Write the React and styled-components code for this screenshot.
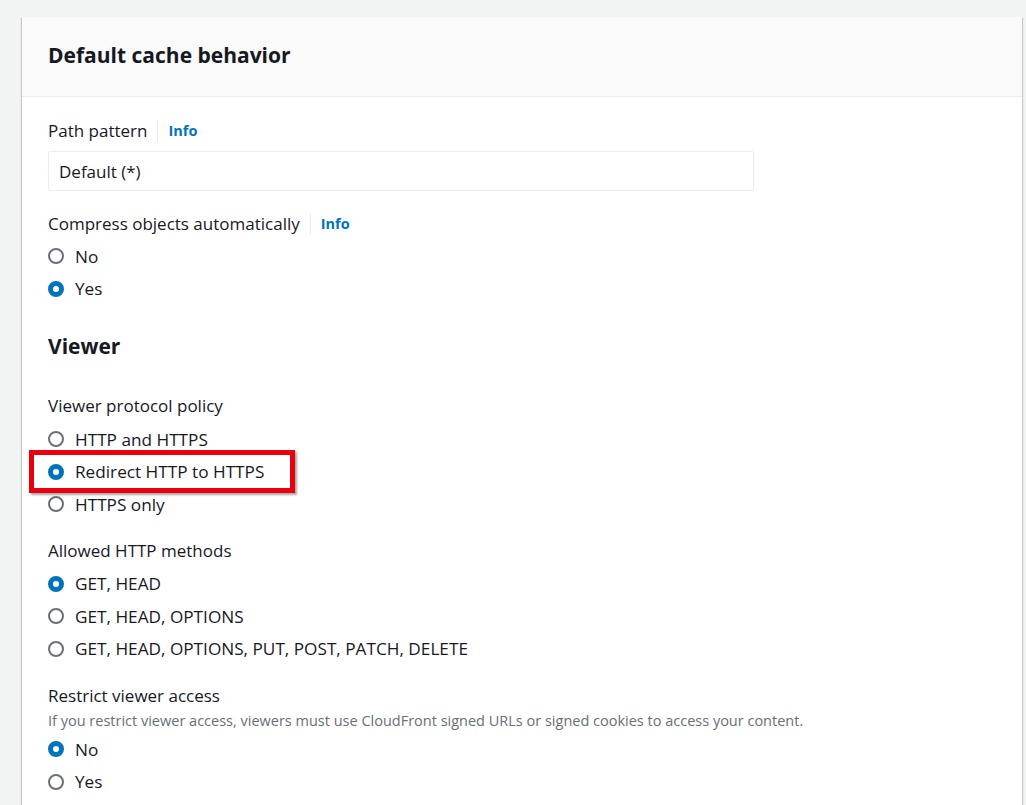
import React from "react";
import styled, { createGlobalStyle } from "styled-components";

const Global = createGlobalStyle`
  html, body { margin: 0; padding: 0; }
  body {
    background: #f2f3f3;
    font-family: "Open Sans", "Noto Sans", Arial, sans-serif;
    color: #16191f;
    -webkit-font-smoothing: antialiased;
  }
`;

const Page = styled.div`
  padding: 17px 0 0 22px;
  height: 805px;
  box-sizing: border-box;
  overflow: hidden;
`;

const Card = styled.section`
  width: 1000px;
  background: #fff;
  box-shadow: 0 1px 1px 0 rgba(0, 28, 36, 0.3), 1px 1px 1px 0 rgba(0, 28, 36, 0.15),
    -1px 1px 1px 0 rgba(0, 28, 36, 0.15);
  min-height: 800px;
`;

const CardHeader = styled.header`
  height: 80px;
  box-sizing: border-box;
  display: flex;
  align-items: center;
  padding: 0 26px 4px;
  background: #fafafa;
  border-bottom: 1px solid #eaeded;
`;

const Title = styled.h2`
  margin: 0;
  font-size: 21px;
  font-weight: 700;
  line-height: 28px;
  color: #16191f;
`;

const Body = styled.div`
  padding: 23px 26px;
  display: flex;
  flex-direction: column;
`;

const Field = styled.div`
  display: flex;
  flex-direction: column;
  margin-top: ${(p) => p.$mt || 0}px;
`;

const LabelRow = styled.div`
  display: flex;
  align-items: center;
  height: 22px;
`;

const Label = styled.span`
  font-size: 17px;
  line-height: 22px;
  color: #16191f;
`;

const InfoLink = styled.a`
  margin-left: 10px;
  padding-left: 10px;
  border-left: 1px solid #eaeded;
  font-size: 14.5px;
  font-weight: 700;
  line-height: 22px;
  color: #0073bb;
  text-decoration: none;
`;

const Input = styled.div`
  margin-top: 9px;
  width: 706px;
  height: 40px;
  box-sizing: border-box;
  border: 1px solid #eaeded;
  border-radius: 2px;
  padding: 0 10px;
  display: flex;
  align-items: center;
  font-size: 17px;
  color: #16191f;
`;

const Description = styled.div`
  font-size: 14.5px;
  line-height: 20px;
  color: #687078;
  margin-top: 4px;
`;

const RadioGroup = styled.div`
  display: flex;
  flex-direction: column;
  margin-top: ${(p) => p.$mt ?? 5}px;
`;

const RadioRow = styled.label`
  position: relative;
  display: flex;
  align-items: center;
  height: 32.5px;
  font-size: 17.2px;
  color: #16191f;
`;

const RadioCircle = styled.span`
  width: 16px;
  height: 16px;
  box-sizing: border-box;
  border-radius: 50%;
  flex: none;
  border: ${(p) => (p.$checked ? "5px solid #0073bb" : "2px solid #687078")};
  background: #fff;
  margin-right: 11px;
`;

const Highlight = styled.span`
  position: absolute;
  left: -19px;
  top: -6px;
  width: 266px;
  height: 43px;
  box-sizing: border-box;
  border: 5px solid #e8000d;
  box-shadow: 2px 2px 2px rgba(0, 0, 0, 0.35);
  pointer-events: none;
`;

const Heading = styled.h3`
  margin: 27px 0 0;
  font-size: 21px;
  font-weight: 700;
  line-height: 28px;
  color: #16191f;
`;

function Radio({ checked, children, highlight }) {
  return (
    <RadioRow>
      <RadioCircle $checked={checked} />
      {children}
      {highlight && <Highlight />}
    </RadioRow>
  );
}

function FieldLabel({ children, info }) {
  return (
    <LabelRow>
      <Label>{children}</Label>
      {info && <InfoLink href="#">Info</InfoLink>}
    </LabelRow>
  );
}

export default function App() {
  return (
    <>
      <Global />
      <Page>
        <Card>
          <CardHeader>
            <Title>Default cache behavior</Title>
          </CardHeader>
          <Body>
            <Field>
              <FieldLabel info>Path pattern</FieldLabel>
              <Input>Default (*)</Input>
            </Field>
            <Field $mt={22}>
              <FieldLabel info>Compress objects automatically</FieldLabel>
              <RadioGroup>
                <Radio>No</Radio>
                <Radio checked>Yes</Radio>
              </RadioGroup>
            </Field>
            <Heading>Viewer</Heading>
            <Field $mt={35}>
              <FieldLabel>Viewer protocol policy</FieldLabel>
              <RadioGroup $mt={6}>
                <Radio>HTTP and HTTPS</Radio>
                <Radio checked highlight>
                  Redirect HTTP to HTTPS
                </Radio>
                <Radio>HTTPS only</Radio>
              </RadioGroup>
            </Field>
            <Field $mt={19}>
              <FieldLabel>Allowed HTTP methods</FieldLabel>
              <RadioGroup $mt={6}>
                <Radio checked>GET, HEAD</Radio>
                <Radio>GET, HEAD, OPTIONS</Radio>
                <Radio>GET, HEAD, OPTIONS, PUT, POST, PATCH, DELETE</Radio>
              </RadioGroup>
            </Field>
            <Field $mt={20}>
              <FieldLabel>Restrict viewer access</FieldLabel>
              <Description>
                If you restrict viewer access, viewers must use CloudFront signed URLs or signed
                cookies to access your content.
              </Description>
              <RadioGroup $mt={2}>
                <Radio checked>No</Radio>
                <Radio>Yes</Radio>
              </RadioGroup>
            </Field>
          </Body>
        </Card>
      </Page>
    </>
  );
}
